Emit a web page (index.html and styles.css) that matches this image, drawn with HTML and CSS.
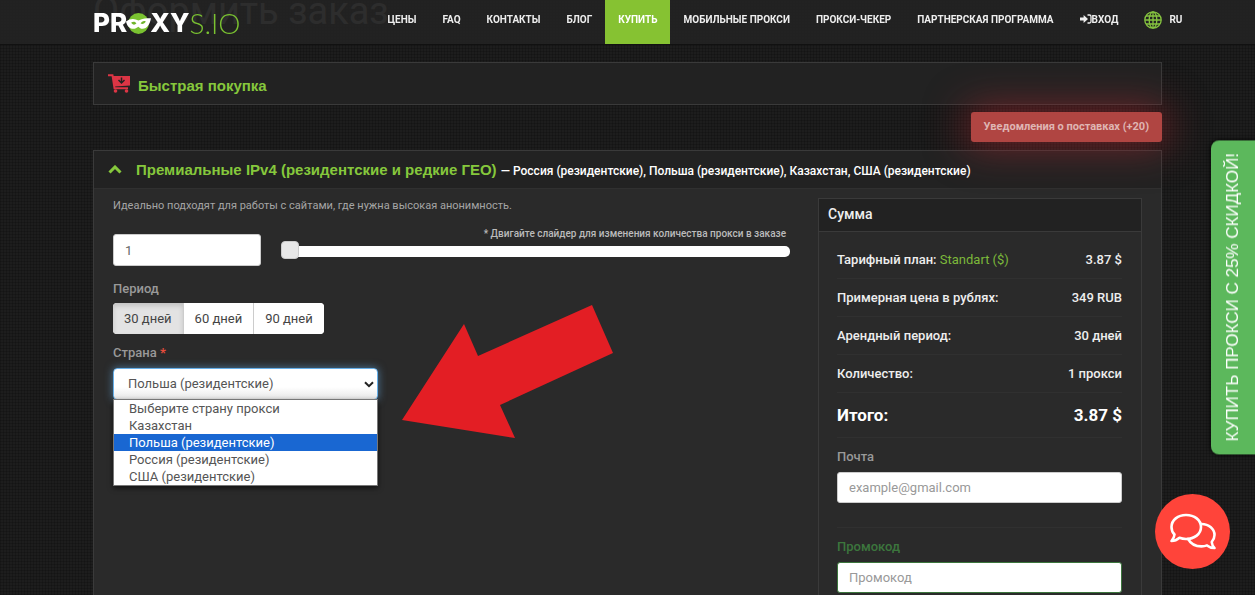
FILE: index.html
```html
<!DOCTYPE html>
<html lang="ru">
<head>
<meta charset="utf-8">
<title>PROXYS.IO — Оформить заказ</title>
<link rel="stylesheet" href="styles.css">
</head>
<body>
<header class="topbar">
  <div class="container topbar-inner">
    <a class="logo" href="#" aria-label="PROXYS.IO">
      <span class="logo-bold">PR</span>
      <svg class="logo-mask" viewBox="0 0 24 20" aria-hidden="true">
        <circle cx="12" cy="10" r="10" fill="#7ac231"/>
        <path d="M0 8c4-3 8-3 12-1 4-2 8-2 12-2-1 6-4 10-8 10-2 0-3-1-4-2-2 1-3 2-5 2-4 0-6-3-7-7z" fill="#fff"/>
        <path d="M5 9c2-1 4-1 5 1-2 2-4 1-5-1zm9 1c1-2 3-3 5-2-1 2-3 3-5 2z" fill="#6fb52b"/>
      </svg>
      <span class="logo-bold">XY</span><span class="logo-thin">S.IO</span>
    </a>
    <nav class="nav">
      <a href="#">ЦЕНЫ</a>
      <a href="#">FAQ</a>
      <a href="#">КОНТАКТЫ</a>
      <a href="#">БЛОГ</a>
      <a class="active" href="#">КУПИТЬ</a>
      <a href="#">МОБИЛЬНЫЕ ПРОКСИ</a>
      <a href="#">ПРОКСИ-ЧЕКЕР</a>
      <a href="#">ПАРТНЕРСКАЯ ПРОГРАММА</a>
      <a href="#"><svg class="login-icon" viewBox="0 0 12 10" aria-hidden="true"><path d="M0 3.400h3.600V1L8 5 3.600 9V6.600H0z" fill="#eee"/><path d="M7.500 1h2q1.500 0 1.500 1.500v5Q11 9 9.500 9h-2" fill="none" stroke="#eee" stroke-width="1.300"/></svg>ВХОД</a>
      <a class="lang" href="#"><svg class="globe" viewBox="0 0 18 18" fill="none" stroke="#86c440" stroke-width="1.300" aria-hidden="true"><circle cx="9" cy="9" r="8.200"/><ellipse cx="9" cy="9" rx="3.800" ry="8.200"/><path d="M9 1v16M1 9h16M2 5h14M2 13h14"/></svg>RU</a>
    </nav>
  </div>
</header>

<main class="container">
  <h1 class="page-title">Оформить заказ</h1>

  <section class="quick">
    <svg class="cart" viewBox="0 0 22 19" aria-hidden="true">
      <path d="M0 1.300h4.500l2 13H20" fill="none" stroke="#dc3545" stroke-width="2"/>
      <path d="M4.500 2H22v9.500L6.500 12.500z" fill="#dc3545"/>
      <circle cx="7.500" cy="17" r="1.800" fill="#dc3545"/><circle cx="18.500" cy="17" r="1.800" fill="#dc3545"/>
      <path d="M13.500 3.500v5M10.500 6l3 3 3-3" fill="none" stroke="#222" stroke-width="1.500"/>
    </svg>
    <h2 class="quick-title">Быстрая покупка</h2>
  </section>

  <div class="actions"><button class="notify" type="button">Уведомления о поставках (+20)</button></div>

  <section class="panel">
    <div class="panel-head">
      <svg class="chevron" viewBox="0 0 14 9" aria-hidden="true"><path d="M1.500 7.500L7 2l5.500 5.500" fill="none" stroke="#86c83c" stroke-width="3"/></svg>
      <h2 class="panel-title">Премиальные IPv4 (резидентские и редкие ГЕО) <small>— Россия (резидентские), Польша (резидентские), Казахстан, США (резидентские)</small></h2>
    </div>
    <div class="panel-body">
      <form class="order">
        <p class="lead">Идеально подходят для работы с сайтами, где нужна высокая анонимность.</p>
        <div class="amount">
          <input class="field count" type="text" value="1" aria-label="Количество прокси">
          <div class="slider">
            <label class="hint" for="range">* Двигайте слайдер для изменения количества прокси в заказе</label>
            <input class="range" id="range" type="range" min="1" max="1000" value="1">
          </div>
        </div>
        <span class="label" id="period-label">Период</span>
        <div class="periods" role="group" aria-labelledby="period-label">
          <button class="pressed" type="button">30 дней</button>
          <button type="button">60 дней</button>
          <button type="button">90 дней</button>
        </div>
        <label class="label" for="country">Страна <b class="required">*</b></label>
        <div class="picker">
          <select class="country" id="country">
            <option>Выберите страну прокси</option>
            <option>Казахстан</option>
            <option selected>Польша (резидентские)</option>
            <option>Россия (резидентские)</option>
            <option>США (резидентские)</option>
          </select>
          <svg class="caret" viewBox="0 0 10 7" aria-hidden="true"><path d="M1 1.200l4 4 4-4" fill="none" stroke="#222" stroke-width="2"/></svg>
          <ul class="menu">
            <li>Выберите страну прокси</li>
            <li>Казахстан</li>
            <li class="selected">Польша (резидентские)</li>
            <li>Россия (резидентские)</li>
            <li>США (резидентские)</li>
          </ul>
          <svg class="arrow" viewBox="0 0 212 134" aria-hidden="true"><path d="M0 115L62 19 76 51 190 0 211 48 98 100 113 133z" fill="#e31e24"/></svg>
        </div>
      </form>

      <aside class="summary">
        <h3 class="summary-head">Сумма</h3>
        <div class="summary-body">
          <dl class="rows">
            <div class="row"><dt>Тарифный план: <a href="#">Standart ($)</a></dt><dd>3.87 $</dd></div>
            <div class="row"><dt>Примерная цена в рублях:</dt><dd>349 RUB</dd></div>
            <div class="row"><dt>Арендный период:</dt><dd>30 дней</dd></div>
            <div class="row"><dt>Количество:</dt><dd>1 прокси</dd></div>
            <div class="row total"><dt>Итого:</dt><dd>3.87 $</dd></div>
          </dl>
          <div class="group">
            <label class="label" for="mail">Почта</label>
            <input class="field" id="mail" type="email" placeholder="example@gmail.com">
          </div>
          <div class="group promo">
            <label class="label" for="promo">Промокод</label>
            <input class="field" id="promo" type="text" placeholder="Промокод">
          </div>
        </div>
      </aside>
    </div>
  </section>
</main>

<a class="discount" href="#">КУПИТЬ ПРОКСИ С 25% СКИДКОЙ!</a>
<button class="chat" type="button" aria-label="Чат">
  <svg viewBox="0 0 46 37" fill="none" stroke="#fff" stroke-width="2.600" stroke-linejoin="round" stroke-linecap="round" aria-hidden="true">
    <path d="M16 2c8.500 0 15 5 15 12s-6.500 12-15 12c-2.500 0-4.500-.4-6.500-1.200C7 27 4 28 1.500 28c1.800-2 2.800-4 3-6.500C2.500 19.500 1.500 17 1.500 14 1.500 7 8 2 16 2z"/>
    <path d="M31.500 11C39 11 44.500 16 44.500 22c0 2.800-1 5-2.800 7 .2 2.200 1 4 2.800 6-2.800 0-5.500-1-7.500-2.600-1.700.7-3.500 1-5.500 1-6 0-11-3-13.500-7.600"/>
  </svg>
</button>
</body>
</html>
```
FILE: styles.css
```css
* { box-sizing: border-box; }
body {
  margin: 0;
  height: 100vh;
  overflow: hidden auto;
  scrollbar-width: none;
  font: 13px/18px Roboto, "Liberation Sans", sans-serif;
  color: #eee;
  background-color: #1d1d1d;
  background-image:
    repeating-linear-gradient(0deg, rgba(0, 0, 0, .18) 0 1px, transparent 1px 3px),
    repeating-linear-gradient(90deg, rgba(0, 0, 0, .18) 0 1px, transparent 1px 3px);
}
a { color: inherit; text-decoration: none; }
h1, h2, h3, p, dl, dd, ul { margin: 0; padding: 0; }
button, input, select { font: inherit; }
.container { width: 86%; max-width: 1070px; margin: 0 auto; }
@media (max-width: 1300px) { .container { width: calc(100% - 186px); } }

.topbar {
  position: fixed;
  inset: 0 0 auto;
  z-index: 5;
  height: 45px;
  background: rgba(34, 34, 34, .93);
  border-bottom: 1px solid #111;
}
.topbar-inner { display: flex; align-items: stretch; gap: 134px; }
.logo { display: flex; align-items: center; height: 46px; font: 26px/28px Inter, sans-serif; color: #fff; width: 148px; }
.logo-bold { font-weight: 800; }
.logo-mask { width: 25px; height: 21px; margin: 0 -1px; flex: none; }
.logo-thin { font-family: Lato, sans-serif; font-weight: 300; font-size: 28px; color: #7ac231; }
.nav { display: flex; white-space: nowrap; font-size: 10px; font-weight: 700; line-height: 40px; height: 44px; }
.nav a { padding: 0 13px; }
.nav .active { background: #86c232; color: #fff; }
.login-icon { width: 12px; height: 10px; vertical-align: -1px; }
.lang { display: flex; gap: 7px; height: 40px; }
.globe { width: 18px; height: 40px; }

.page-title { height: 62px; font-size: 38px; font-weight: 400; line-height: 22px; color: #bbb; }
.quick { display: flex; align-items: center; gap: 8px; height: 43px; padding: 4px 14px 0; background: #222; border: 1px solid #3a3a3a; }
.cart { width: 22px; height: 19px; margin-bottom: 4px; }
.quick-title, .panel-title { font: bold 15px/22px "Liberation Sans", sans-serif; color: #86c83c; }
.actions { display: flex; justify-content: flex-end; padding: 7px 0 8px; }
.notify { height: 30px; padding: 0 13px; border: 0; border-radius: 3px; background: #b04542; color: #dfb5b3; font-size: 11px; font-weight: 700; box-shadow: 0 0 40px 4px rgba(190, 40, 50, .55); }

.panel { background: #2a2a2a; border: 1px solid #3a3a3a; border-bottom: 0; }
.panel-head { display: flex; align-items: center; gap: 14px; min-height: 38px; padding: 0 14px; background: #222; border-bottom: 1px solid #303030; }
.chevron { width: 14px; height: 9px; }
.panel-title small { font: 500 12px/18px Roboto, sans-serif; color: #fff; }
.panel-body { display: flex; gap: 28px; padding: 9px 19px 0; }
.order { flex: 1; }
.lead { font-size: 11px; line-height: 16px; color: #a5a5a5; }
.amount { display: flex; gap: 20px; margin-bottom: 13px; }
.field { display: block; width: 100%; height: 31px; padding: 0 11px; border: 1px solid #ccc; border-radius: 3px; background: #fff; color: #666; }
.field::placeholder { color: #999; opacity: 1; }
.count { width: 148px; height: 32px; margin-top: 20px; }
.slider { flex: 1; margin-top: 12px; text-align: right; }
.hint { display: block; padding-right: 4px; font-size: 10px; font-weight: 500; line-height: 16px; color: #bbb; }
.range { display: block; appearance: none; width: 100%; height: 18px; margin: 0; background: transparent; }
.range::-webkit-slider-runnable-track { height: 11px; border-radius: 5px; background: #fff; }
.range::-webkit-slider-thumb { appearance: none; width: 18px; height: 18px; margin-top: -5px; border: 1px solid #ccc; border-radius: 4px; background: #e8e8e8; }
.label { display: block; font-size: 13px; font-weight: 500; line-height: 20px; color: #999; }
.required { color: #e74c3c; }
.periods { display: inline-flex; margin: 4px 0 9px; border-radius: 4px; overflow: hidden; background: #fff; }
.periods button { height: 31px; padding: 0 11px; border: 0; border-right: 1px solid #ccc; background: #fff; color: #444; }
.periods button:last-child { border-right: 0; }
.periods .pressed { background: #e3e3e3; box-shadow: inset 0 3px 5px rgba(0, 0, 0, .15); }
.picker { position: relative; width: 265px; margin-top: 5px; }
.country { appearance: none; display: block; width: 100%; height: 32px; padding: 0 14px; border: 1px solid #66afe9; border-radius: 4px; background: linear-gradient(#fff 60%, #e8e8e8); color: #555; box-shadow: 0 0 8px rgba(102, 175, 233, .6); }
.caret { position: absolute; right: 4px; top: 13px; width: 10px; height: 7px; }
.menu { position: absolute; top: 31px; left: 0; right: 0; list-style: none; background: #fff; border: 1px solid #777; color: #555; line-height: 17px; box-shadow: 0 2px 5px rgba(0, 0, 0, .6); }
.menu li { padding: 0 15px; }
.menu .selected { background: #1967d2; color: #fff; }
.arrow { position: absolute; left: 289px; top: -63px; width: 212px; height: 134px; }

.summary { width: 324px; background: #2a2a2a; border: 1px solid #3a3a3a; border-bottom: 0; }
.summary-head { height: 33px; padding: 0 9px; background: #222; border-bottom: 1px solid #3a3a3a; font-size: 14px; font-weight: 500; line-height: 30px; }
.summary-body { padding: 9px 19px 0 18px; }
.row { display: flex; justify-content: space-between; align-items: center; height: 38px; border-bottom: 1px solid #303030; font-weight: 500; }
.row a { color: #7cb83a; font-weight: 400; }
.total { height: 45px; font-size: 17px; font-weight: 700; color: #fff; }
.group { padding: 9px 0 24px; border-bottom: 1px solid #303030; }
.group .field { margin-top: 5px; }
.promo { border: 0; }
.promo .label { color: #3c763d; }
.promo .field { border-color: #3c763d; }

.discount { position: fixed; right: 0; top: 140px; z-index: 4; width: 44px; padding: 13px 0; border-radius: 0 8px 8px 0; background: #5cb85c; color: #fff; font: 17px/44px "Liberation Sans", sans-serif; writing-mode: vertical-rl; transform: rotate(180deg); white-space: nowrap; box-shadow: 0 0 5px #000; }
.chat { position: fixed; right: 25px; bottom: 26px; z-index: 4; display: grid; place-items: center; width: 75px; height: 75px; padding: 0; border: 0; border-radius: 50%; background: #ff443a; }
.chat svg { width: 46px; height: 37px; }
```
